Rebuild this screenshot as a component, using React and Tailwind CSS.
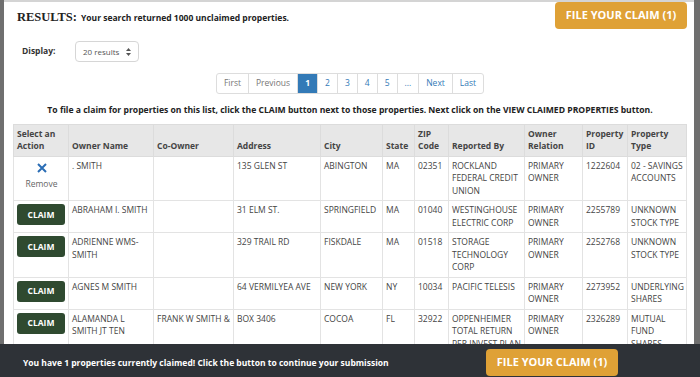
import React from 'react'

const rows = [
    {
        claimed: true,
        owner: '. SMITH',
        coOwner: '',
        address: '135 GLEN ST',
        city: 'ABINGTON',
        state: 'MA',
        zip: '02351',
        reportedBy: 'ROCKLAND FEDERAL CREDIT UNION',
        relation: 'PRIMARY OWNER',
        id: '1222604',
        type: '02 - SAVINGS ACCOUNTS',
    },
    {
        owner: 'ABRAHAM I. SMITH',
        coOwner: '',
        address: '31 ELM ST.',
        city: 'SPRINGFIELD',
        state: 'MA',
        zip: '01040',
        reportedBy: 'WESTINGHOUSE ELECTRIC CORP',
        relation: 'PRIMARY OWNER',
        id: '2255789',
        type: 'UNKNOWN STOCK TYPE',
    },
    {
        owner: 'ADRIENNE WMS-SMITH',
        coOwner: '',
        address: '329 TRAIL RD',
        city: 'FISKDALE',
        state: 'MA',
        zip: '01518',
        reportedBy: 'STORAGE TECHNOLOGY CORP',
        relation: 'PRIMARY OWNER',
        id: '2252768',
        type: 'UNKNOWN STOCK TYPE',
    },
    {
        owner: 'AGNES M SMITH',
        coOwner: '',
        address: '64 VERMILYEA AVE',
        city: 'NEW YORK',
        state: 'NY',
        zip: '10034',
        reportedBy: 'PACIFIC TELESIS',
        relation: 'PRIMARY OWNER',
        id: '2273952',
        type: 'UNDERLYING SHARES',
    },
    {
        owner: 'ALAMANDA L SMITH JT TEN',
        coOwner: 'FRANK W SMITH &',
        address: 'BOX 3406',
        city: 'COCOA',
        state: 'FL',
        zip: '32922',
        reportedBy: 'OPPENHEIMER TOTAL RETURN PER.INVEST.PLAN',
        relation: 'PRIMARY OWNER',
        id: '2326289',
        type: 'MUTUAL FUND SHARES',
    },
]

const columns = [
    { label: ['Select an', 'Action'], width: 'w-[55px]' },
    { label: ['Owner Name'], width: 'w-[85px]' },
    { label: ['Co-Owner'], width: 'w-[80px]' },
    { label: ['Address'], width: 'w-[87px]' },
    { label: ['City'], width: 'w-[62px]' },
    { label: ['State'], width: 'w-[32px]' },
    { label: ['ZIP', 'Code'], width: 'w-[34px]' },
    { label: ['Reported By'], width: 'w-[76px]' },
    { label: ['Owner', 'Relation'], width: 'w-[58px]' },
    { label: ['Property', 'ID'], width: 'w-[45px]' },
    { label: ['Property', 'Type'], width: 'w-[59px]' },
]

const pages = ['First', 'Previous', '1', '2', '3', '4', '5', '...', 'Next', 'Last']

function ClaimButton({ className = '' }) {
    return (
        <button
            className={`h-[27px] w-[132px] rounded-[4px] bg-[#dfa136] text-[11px] font-bold text-white ${className}`}
        >
            FILE YOUR CLAIM (1)
        </button>
    )
}

function Cell({ children, className = '' }) {
    return (
        <td className={`border border-[#e3e3e3] py-[3px] pr-[2px] pl-[3px] align-top ${className}`}>
            {children}
        </td>
    )
}

export default function App() {
    return (
        <div
            className="relative h-[377px] w-[700px] overflow-hidden bg-[#6f6f6f]"
            style={{ fontFamily: '"Open Sans", "Liberation Sans", sans-serif' }}
        >
            <div className="ml-[4px] h-full w-[690px] border-t-2 border-[#d4d4d4] bg-white pl-[9px] pr-[7px]">
                {/* heading */}
                <div className="flex items-start justify-between">
                    <div className="mt-[6px] flex items-baseline gap-[4px] pl-[4px]">
                        <span
                            className="text-[12.5px] font-bold text-[#222]"
                            style={{ fontFamily: '"Liberation Serif", serif' }}
                        >
                            RESULTS:
                        </span>
                        <span className="text-[8.5px] font-bold text-[#222]">
                            Your search returned 1000 unclaimed properties.
                        </span>
                    </div>
                    <ClaimButton />
                </div>

                {/* display select */}
                <div className="mt-[12px] flex items-center">
                    <span className="ml-[9px] w-[53px] text-[8.5px] font-bold text-[#333]">Display:</span>
                    <div className="flex h-[21px] w-[64px] items-center justify-between rounded-[4px] border border-[#d6d6d6] pl-[7px] pr-[7px] text-[8px] text-[#555]">
                        <span>20 results</span>
                        <svg width="5" height="8" viewBox="0 0 5 8" fill="#555">
                            <path d="M2.5 0L5 3H0z" />
                            <path d="M2.5 8L0 5h5z" />
                        </svg>
                    </div>
                </div>

                {/* pagination */}
                <div className="mt-[11px] flex justify-center">
                    <div className="flex h-[21px] overflow-hidden rounded-[3px] border border-[#ddd] text-[8.5px]">
                        {pages.map((p, i) => (
                            <span
                                key={p}
                                className={`flex items-center px-[7px] ${i > 0 ? 'border-l border-[#ddd]' : ''} ${
                                    p === '1'
                                        ? 'bg-[#337ab7] font-bold text-white'
                                        : i < 2
                                          ? 'text-[#777]'
                                          : 'text-[#337ab7]'
                                }`}
                            >
                                {p}
                            </span>
                        ))}
                    </div>
                </div>

                <p className="mt-[10px] text-center text-[8.6px] font-bold text-[#222]">
                    To file a claim for properties on this list, click the CLAIM button next to those
                    properties. Next click on the VIEW CLAIMED PROPERTIES button.
                </p>

                {/* results table */}
                <table className="mt-[7px] w-[673px] table-fixed border-collapse text-[8.5px] leading-[12.5px] text-[#444]">
                    <colgroup>
                        {columns.map((c, i) => (
                            <col key={i} className={c.width} />
                        ))}
                    </colgroup>
                    <thead>
                        <tr className="bg-[#e7e7e7]">
                            {columns.map((c, i) => (
                                <th
                                    key={i}
                                    className="border border-[#dcdcdc] py-[3px] pr-[2px] pl-[3px] text-left align-bottom font-bold text-[#444]"
                                >
                                    {c.label.map((l) => (
                                        <div key={l}>{l}</div>
                                    ))}
                                </th>
                            ))}
                        </tr>
                    </thead>
                    <tbody>
                        {rows.map((r) => (
                            <tr key={r.id}>
                                <Cell className="px-[2px]">
                                    {r.claimed ? (
                                        <div className="flex flex-col items-center pt-[3px] text-[#666]">
                                            <svg width="10" height="10" viewBox="0 0 10 10">
                                                <path
                                                    d="M1 1L9 9M9 1L1 9"
                                                    stroke="#2a6db5"
                                                    strokeWidth="2"
                                                />
                                            </svg>
                                            <span className="mt-[5px]">Remove</span>
                                        </div>
                                    ) : (
                                        <button className="h-[21px] w-[48px] rounded-[3px] bg-[#2f4a30] text-[8.5px] font-bold text-white">
                                            CLAIM
                                        </button>
                                    )}
                                </Cell>
                                <Cell>{r.owner}</Cell>
                                <Cell>{r.coOwner}</Cell>
                                <Cell>{r.address}</Cell>
                                <Cell>{r.city}</Cell>
                                <Cell>{r.state}</Cell>
                                <Cell>{r.zip}</Cell>
                                <Cell>{r.reportedBy}</Cell>
                                <Cell>{r.relation}</Cell>
                                <Cell>{r.id}</Cell>
                                <Cell>{r.type}</Cell>
                            </tr>
                        ))}
                    </tbody>
                </table>
            </div>

            {/* claimed bar */}
            <div className="absolute bottom-0 left-0 right-0 flex h-[33px] items-start bg-[#2e3237] pt-[5px]">
                <span className="w-[486px] pl-[23px] text-[8.5px] font-bold leading-[27px] text-white">
                    You have 1 properties currently claimed! Click the button to continue your submission
                </span>
                <ClaimButton className="w-[131px]" />
            </div>
        </div>
    )
}
